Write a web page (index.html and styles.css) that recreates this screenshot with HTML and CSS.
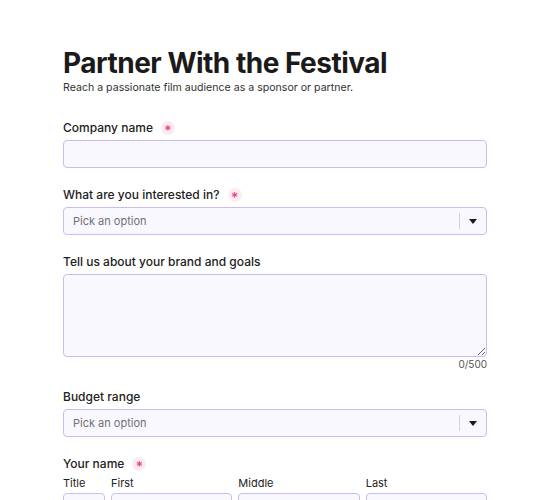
FILE: index.html
```html
<!DOCTYPE html>
<html>
<head>
<meta charset="utf-8">
<link rel="stylesheet" href="styles.css">
</head>
<body>
<main class="form">
  <h1 class="title">Partner With the Festival</h1>
  <p class="subtitle">Reach a passionate film audience as a sponsor or partner.</p>

  <div class="field">
    <label class="label">Company name <span class="req">*</span></label>
    <input class="input" type="text">
  </div>

  <div class="field">
    <label class="label">What are you interested in? <span class="req">*</span></label>
    <div class="select">
      <span class="placeholder">Pick an option</span>
      <span class="divider"></span>
      <span class="arrow"></span>
    </div>
  </div>

  <div class="field">
    <label class="label">Tell us about your brand and goals</label>
    <textarea class="textarea"></textarea>
    <div class="counter">0/500</div>
  </div>

  <div class="field field-tight">
    <label class="label">Budget range</label>
    <div class="select">
      <span class="placeholder">Pick an option</span>
      <span class="divider"></span>
      <span class="arrow"></span>
    </div>
  </div>

  <div class="field">
    <label class="label">Your name <span class="req">*</span></label>
    <div class="name-row">
      <div class="name-col col-title">
        <span class="sublabel">Title</span>
        <input class="input" type="text">
      </div>
      <div class="name-col">
        <span class="sublabel">First</span>
        <input class="input" type="text">
      </div>
      <div class="name-col">
        <span class="sublabel">Middle</span>
        <input class="input" type="text">
      </div>
      <div class="name-col">
        <span class="sublabel">Last</span>
        <input class="input" type="text">
      </div>
    </div>
  </div>
</main>
</body>
</html>
```

FILE: styles.css
```css
* { box-sizing: border-box; }
html, body { margin: 0; padding: 0; background: #fff; }
body {
  font-family: Inter, "Noto Sans", sans-serif;
  color: #1f1f1f;
  overflow: hidden;
}
.form {
  width: 424px;
  margin: 0 0 0 63px;
  padding-top: 46px;
}
.title {
  margin: 0;
  font-size: 28px;
  line-height: 34px;
  font-weight: 700;
  letter-spacing: -0.5px;
  color: #1a1a1a;
}
.subtitle {
  margin: 0;
  font-size: 10.6px;
  line-height: 16px;
  color: #333;
}
.field {
  margin-top: 18px;
  display: flex;
  flex-direction: column;
}
.field:first-of-type { margin-top: 23px; }
.field-tight { margin-top: 17px; }
.label {
  display: flex;
  align-items: center;
  gap: 4px;
  font-size: 12px;
  line-height: 18px;
  font-weight: 500;
  color: #222;
  margin-bottom: 3px;
}
.req {
  display: inline-flex;
  align-items: center;
  justify-content: center;
  width: 14px;
  height: 14px;
  border-radius: 50%;
  background: #fcebf2;
  color: #e5487f;
  font-size: 14px;
  line-height: 1;
  padding-top: 5px;
  margin-left: 4px;
}
.input, .select, .textarea {
  width: 100%;
  height: 28px;
  border: 1px solid #c7bdf3;
  border-radius: 4px;
  background: #f9f8ff;
  font-family: inherit;
  font-size: 12px;
  outline: none;
}
.select {
  display: flex;
  align-items: center;
  padding-left: 9px;
}
.placeholder {
  flex: 1;
  color: #707070;
  font-size: 11px;
}
.divider {
  width: 1px;
  height: 16px;
  background: #d6d2e4;
}
.arrow {
  width: 26px;
  display: flex;
  justify-content: center;
}
.arrow::before {
  content: "";
  border-left: 4.5px solid transparent;
  border-right: 4.5px solid transparent;
  border-top: 5px solid #1a1a1a;
}
.textarea {
  height: 83px;
  resize: vertical;
  display: block;
}
.counter {
  text-align: right;
  font-size: 10px;
  line-height: 14px;
  color: #555;
  margin-top: 0;
}
.name-row {
  display: flex;
  gap: 6px;
}
.name-col {
  flex: 1;
  display: flex;
  flex-direction: column;
}
.col-title { flex: 0 0 42px; }
.sublabel {
  font-size: 11px;
  line-height: 14px;
  color: #222;
  margin-bottom: 3px;
}
```
